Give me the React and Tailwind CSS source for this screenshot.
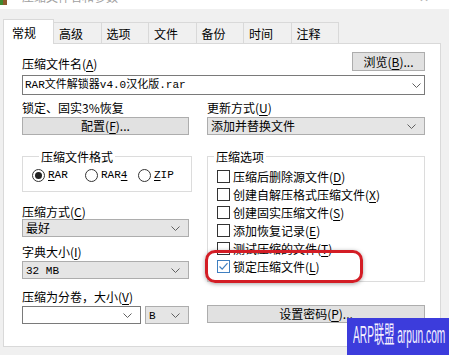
import { Fragment } from 'react';

const mono = "font-['Liberation_Mono','Noto_Sans_CJK_SC',monospace]";

function U({ children }) {
  return <span className="underline decoration-1 underline-offset-[2px]">{children}</span>;
}

function Chevron() {
  return (
    <svg width="9" height="5" viewBox="0 0 9 5" className="shrink-0">
      <path d="M0.5 0.5 L4.5 4.5 L8.5 0.5" fill="none" stroke="#606060" strokeWidth="1" />
    </svg>
  );
}

function Label({ children, className = '' }) {
  return <div className={`h-[15px] leading-[15px] whitespace-nowrap ${className}`}>{children}</div>;
}

function Button({ children, className = '' }) {
  return (
    <div className={`flex items-center justify-center border border-[#adadad] bg-[#e1e1e1] leading-none whitespace-nowrap ${className}`}>
      {children}
    </div>
  );
}

function Select({ children, className = '' }) {
  return (
    <div className={`flex h-[18px] items-center border border-[#adadad] bg-[#e5e5e5] pl-[3px] pr-[8px] ${className}`}>
      <span className="flex-1 leading-none whitespace-nowrap">{children}</span>
      <Chevron />
    </div>
  );
}

function Radio({ checked, children }) {
  return (
    <div className="flex w-[53px] items-center">
      <span className="flex h-[13px] w-[13px] items-center justify-center rounded-full border border-[#333] bg-white">
        {checked && <span className="h-[7px] w-[7px] rounded-full bg-[#222]" />}
      </span>
      <span className={`ml-[3px] text-[11px] leading-none ${mono}`}>{children}</span>
    </div>
  );
}

function Check({ checked, children, highlight }) {
  return (
    <div className="relative flex h-[18px] items-center pl-[9px]">
      {checked ? (
        <span className="flex h-[13px] w-[13px] items-center justify-center border border-[#3f7fc0] bg-white">
          <svg width="11" height="11" viewBox="0 0 11 11">
            <path d="M1.5 5.5 L4.2 8.2 L9.5 2.2" fill="none" stroke="#3f7fc0" strokeWidth="1.2" />
          </svg>
        </span>
      ) : (
        <span className="h-[13px] w-[13px] border border-[#333] bg-white" />
      )}
      <span className="ml-[3px] leading-[15px] whitespace-nowrap">{children}</span>
      {highlight && (
        <div className="absolute left-[-3px] top-[-7px] h-[33px] w-[158px] rounded-[10px] border-[3px] border-[#d31d25] shadow-[0_1px_4px_rgba(0,0,0,0.35)]" />
      )}
    </div>
  );
}

const tabs = ['高级', '选项', '文件', '备份', '时间', '注释'];

const options = [
  ['压缩后删除源文件', 'D'],
  ['创建自解压格式压缩文件', 'X'],
  ['创建固实压缩文件', 'S'],
  ['添加恢复记录', 'E'],
  ['测试压缩的文件', 'T'],
];

export default function App() {
  return (
    <div className="relative h-[355px] w-[449px] overflow-hidden bg-[#f0f0f0] text-[12px] text-black font-['Noto_Sans_CJK_SC',sans-serif]">
      {/* title bar, cut off at the top */}
      <div className="flex h-[9px] items-start overflow-hidden bg-white">
        <div className="flex h-[5px] w-[7px]">
          <span className="w-[3px] bg-[#3f8a2f]" />
          <span className="w-[4px] bg-[#8c5a2b]" />
        </div>
        <span className="ml-[15px] -mt-[9px] leading-[12px] text-[#a0a0a0]">压缩文件名和参数</span>
        <span className="ml-auto mr-[20px] -mt-[9px] text-[12px] leading-[12px] text-[#b0b0b0]">✕</span>
      </div>

      {/* tabs */}
      <div className="flex h-[34px] items-end pl-[3px]">
        <div className="relative z-10 -mb-px flex h-[25px] w-[51px] items-center border border-b-0 border-[#d9d9d9] bg-white pl-[8px] pt-[2px]">
          常规
        </div>
        {tabs.map((t) => (
          <div key={t} className="flex h-[21px] w-[47.5px] items-center border-r border-t border-[#d9d9d9] bg-[#f0f0f0] pl-[5px] pt-[1px]">
            {t}
          </div>
        ))}
      </div>

      {/* tab page */}
      <div className="ml-[3px] h-[304px] w-[438px] border border-[#d9d9d9] bg-white pl-[18px] pr-[15px] pt-[8px]">
        <div className="flex h-[19px] items-end">
          <Label>
            压缩文件名(<U>A</U>)
          </Label>
          <Button className="ml-auto h-[19px] w-[73px]">
            浏览(<U>B</U>)...
          </Button>
        </div>
        <div className="mt-[4px] flex h-[20px] items-center border border-[#7a7a7a] bg-white pl-[2px] pr-[3px]">
          <span className={`flex-1 whitespace-nowrap text-[11px] leading-none ${mono}`}>RAR文件解锁器v4.0汉化版.rar</span>
          <Chevron />
        </div>

        <div className="mt-[5px] flex gap-[18px]">
          {/* left column */}
          <div className="w-[167px]">
            <Label>锁定、固实3%恢复</Label>
            <Button className="mt-[2px] h-[18px] w-full">
              配置(<U>F</U>)...
            </Button>

            <fieldset className="mt-[14px] w-full border border-[#dcdcdc] pb-[9px] pl-[9px] pt-[5px]">
              <legend className="ml-[7px] px-[2px] leading-[15px]">压缩文件格式</legend>
              <div className="flex h-[13px] items-center">
                <Radio checked>
                  <U>R</U>AR
                </Radio>
                <Radio>
                  RAR<U>4</U>
                </Radio>
                <Radio>
                  <U>Z</U>IP
                </Radio>
              </div>
            </fieldset>

            <Label className="mt-[12px]">
              压缩方式(<U>C</U>)
            </Label>
            <Select>最好</Select>

            <Label className="mt-[7px]">
              字典大小(<U>I</U>)
            </Label>
            <Select className="mt-[2px]">
              <span className={`text-[11px] ${mono}`}>32 MB</span>
            </Select>

            <Label className="mt-[10px]">
              压缩为分卷，大小(<U>V</U>)
            </Label>
            <div className="mt-[2px] flex gap-[4px]">
              <div className="flex h-[18px] w-[119px] items-center justify-end border border-[#7a7a7a] bg-white pr-[8px]">
                <Chevron />
              </div>
              <Select className="flex-1">
                <span className={`text-[11px] ${mono}`}>B</span>
              </Select>
            </div>
          </div>

          {/* right column */}
          <div className="w-[218px]">
            <Label>
              更新方式(<U>U</U>)
            </Label>
            <Select className="mt-[2px]">添加并替换文件</Select>

            <fieldset className="mt-[14px] w-full border border-[#dcdcdc] pb-[6px] pt-[3px]">
              <legend className="ml-[6px] px-[2px] leading-[15px]">压缩选项</legend>
              {options.map(([text, key]) => (
                <Fragment key={key}>
                  <Check>
                    {text}(<U>{key}</U>)
                  </Check>
                </Fragment>
              ))}
              <Check checked highlight>
                锁定压缩文件(<U>L</U>)
              </Check>
            </fieldset>

            <Button className="mt-[23px] h-[18px] w-full">
              设置密码(<U>P</U>)...
            </Button>
          </div>
        </div>
      </div>

      {/* watermark */}
      <div className="absolute bottom-0 left-[347px] right-0 top-[318px] flex items-center overflow-hidden bg-[#3c3cdc] pl-[6px]">
        <span className="scale-y-[2.3] whitespace-nowrap text-[10.2px] leading-none text-[#f4f0ff] font-['Liberation_Sans','Noto_Sans_CJK_SC',sans-serif]">
          ARP联盟 arpun.com
        </span>
      </div>
    </div>
  );
}
